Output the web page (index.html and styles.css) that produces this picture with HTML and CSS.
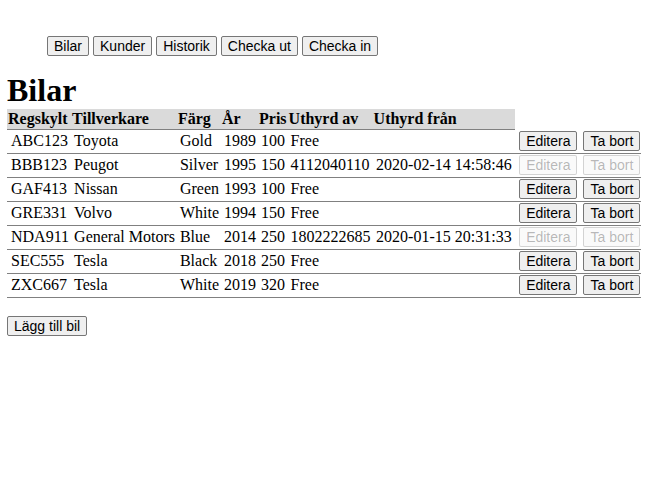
FILE: index.html
```html
<!DOCTYPE html>
<html lang="sv">
<head>
<meta charset="utf-8">
<title>Bilar</title>
<link rel="stylesheet" href="styles.css">
</head>
<body>
<nav class="nav">
  <button class="btn">Bilar</button>
  <button class="btn">Kunder</button>
  <button class="btn">Historik</button>
  <button class="btn">Checka ut</button>
  <button class="btn">Checka in</button>
</nav>
<h1 class="title">Bilar</h1>
<table class="cars">
  <thead>
    <tr><th>Regskylt</th><th>Tillverkare</th><th>Färg</th><th>År</th><th>Pris</th><th>Uthyrd av</th><th class="since">Uthyrd från</th></tr>
  </thead>
  <tbody>
    <tr><td>ABC123</td><td>Toyota</td><td>Gold</td><td>1989</td><td>100</td><td>Free</td><td class="since"></td><td class="act"><button class="btn">Editera</button></td><td class="act"><button class="btn">Ta bort</button></td></tr>
    <tr><td>BBB123</td><td>Peugot</td><td>Silver</td><td>1995</td><td>150</td><td>4112040110</td><td class="since">2020-02-14 14:58:46</td><td class="act"><button class="btn" disabled>Editera</button></td><td class="act"><button class="btn" disabled>Ta bort</button></td></tr>
    <tr><td>GAF413</td><td>Nissan</td><td>Green</td><td>1993</td><td>100</td><td>Free</td><td class="since"></td><td class="act"><button class="btn">Editera</button></td><td class="act"><button class="btn">Ta bort</button></td></tr>
    <tr><td>GRE331</td><td>Volvo</td><td>White</td><td>1994</td><td>150</td><td>Free</td><td class="since"></td><td class="act"><button class="btn">Editera</button></td><td class="act"><button class="btn">Ta bort</button></td></tr>
    <tr><td>NDA911</td><td>General Motors</td><td>Blue</td><td>2014</td><td>250</td><td>1802222685</td><td class="since">2020-01-15 20:31:33</td><td class="act"><button class="btn" disabled>Editera</button></td><td class="act"><button class="btn" disabled>Ta bort</button></td></tr>
    <tr><td>SEC555</td><td>Tesla</td><td>Black</td><td>2018</td><td>250</td><td>Free</td><td class="since"></td><td class="act"><button class="btn">Editera</button></td><td class="act"><button class="btn">Ta bort</button></td></tr>
    <tr><td>ZXC667</td><td>Tesla</td><td>White</td><td>2019</td><td>320</td><td>Free</td><td class="since"></td><td class="act"><button class="btn">Editera</button></td><td class="act"><button class="btn">Ta bort</button></td></tr>
  </tbody>
</table>
<div class="actions">
  <button class="btn">Lägg till bil</button>
</div>
</body>
</html>
```
FILE: styles.css
```css
html { background: #fff; }
body {
  margin: 8px 0 8px 7px;
  font-family: "Liberation Serif", "Times New Roman", serif;
  font-size: 16px;
  color: #000;
}
.nav {
  padding: 28px 0 0 40px;
}
.btn {
  font-family: "Liberation Sans", Arial, sans-serif;
  font-size: 14px;
  line-height: 16px;
  color: #000;
  background: #efefef;
  border: 1px solid #767676;
  border-radius: 2px;
  padding: 1px 6px;
  margin: 0;
  white-space: nowrap;
}
.btn:disabled {
  color: rgba(16, 16, 16, 0.3);
  background: rgba(239, 239, 239, 0.3);
  border-color: rgba(118, 118, 118, 0.3);
}
.title {
  font-size: 32px;
  font-weight: bold;
  margin: 16px 0 0;
  line-height: 37px;
}
.cars {
  border-collapse: collapse;
  white-space: nowrap;
}
.cars th {
  background: #dadada;
  text-align: left;
  padding: 1px 1px;
  font-weight: bold;
  border-bottom: 1px solid #808080;
}
.cars td {
  padding: 1px 2px 2px 3px;
  border-bottom: 1px solid #808080;
}
.cars td:first-child {
  padding-left: 4px;
}
.cars td.since {
  padding-left: 3.5px;
  padding-right: 3.5px;
}
.cars td.act {
  padding-left: 4px;
}
.cars td:last-child {
  padding-right: 1px;
}
.actions {
  margin-top: 18px;
}
```
